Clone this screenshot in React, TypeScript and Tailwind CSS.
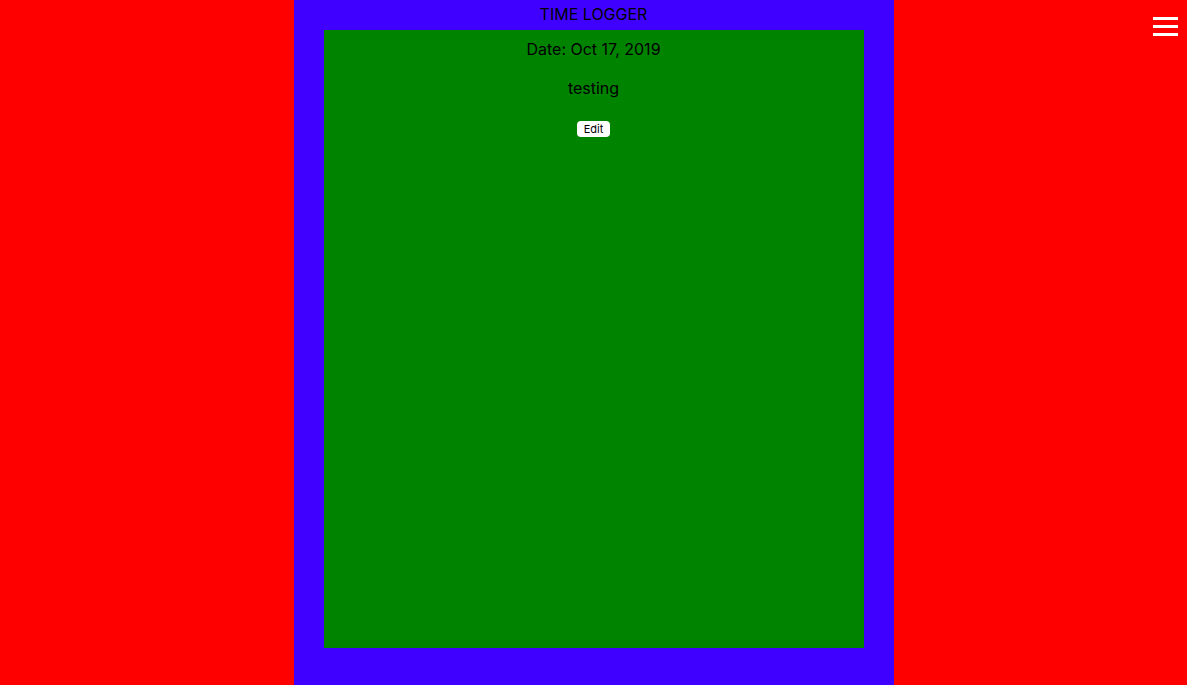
const Menu = () => (
  <button className="absolute right-[9px] top-[17px] flex flex-col gap-[5px]" aria-label="menu">
    <span className="block h-[3px] w-[25px] bg-white" />
    <span className="block h-[3px] w-[25px] bg-white" />
    <span className="block h-[3px] w-[25px] bg-white" />
  </button>
);

export default function App() {
  return (
    <div className="relative min-h-screen bg-[#ff0000] font-['Inter',sans-serif] text-black">
      <Menu />
      <div className="mx-auto flex min-h-screen w-[600px] flex-col bg-[#4000ff]">
        <h1 className="flex h-[30px] items-center justify-center pb-[3px] text-base leading-none">TIME LOGGER</h1>
        <div className="mx-[30px] flex h-[618px] flex-col items-center bg-[#008400] pt-[7px]">
          <p className="text-base leading-6">Date: Oct 17, 2019</p>
          <p className="mt-[15px] text-base leading-6">testing</p>
          <button className="mt-[21px] h-4 rounded-[4px] bg-white px-[7px] text-[11px] leading-4">Edit</button>
        </div>
      </div>
    </div>
  );
}
